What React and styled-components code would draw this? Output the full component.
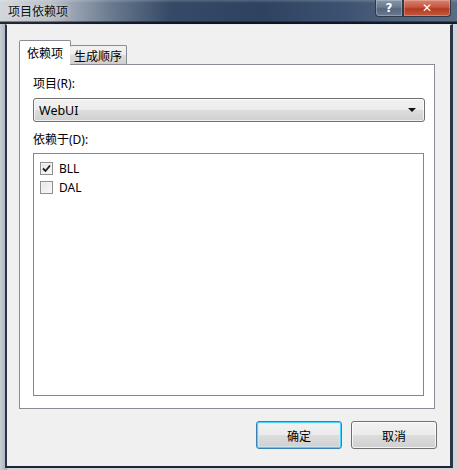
import React from "react";
import styled, { createGlobalStyle } from "styled-components";

const Global = createGlobalStyle`
  html, body { margin: 0; padding: 0; background: #e4e7eb; }
  body { font-family: "Segoe UI", "Noto Sans", "Noto Sans CJK SC", sans-serif; font-size: 12px; color: #000; }
`;

const Window = styled.div`
  width: 457px;
  height: 470px;
  display: flex;
  flex-direction: column;
  background: linear-gradient(to right, #c9ced6 0px, #aab3bf 6px, #cfd4da 8px);
  box-sizing: border-box;
  overflow: hidden;
`;

const TitleBar = styled.div`
  height: 24px;
  flex: none;
  display: flex;
  align-items: flex-start;
  justify-content: space-between;
  padding-left: 8px;
  box-sizing: border-box;
  background:
    linear-gradient(to bottom, rgba(255,255,255,0.18) 0px, rgba(255,255,255,0) 3px, rgba(0,0,0,0) 21px, rgba(10,15,25,0.85) 22px, rgba(10,15,25,0.9) 24px),
    linear-gradient(to right, #d3d7dc 0px, #b6bdc6 50px, #6b7b90 110px, #354a66 170px, #2d4360 260px, #3b5170 340px, #50637e 400px, #5a6b84 457px);
`;

const Title = styled.span`
  font-family: "Noto Sans CJK SC", sans-serif;
  font-size: 12px;
  line-height: 22px;
  color: #111;
  text-shadow: 0 0 6px rgba(255,255,255,0.7);
`;

const Caption = styled.div`
  display: flex;
  margin-right: 6px;
`;

const CapButton = styled.div`
  height: 17px;
  width: ${p => p.$w}px;
  box-sizing: border-box;
  display: flex;
  align-items: center;
  justify-content: center;
  color: #fff;
  font-family: "DejaVu Sans", sans-serif;
  font-weight: bold;
  font-size: 12px;
  border: 1px solid #30394a;
  border-top: none;
  background: ${p => p.$red
    ? "linear-gradient(to bottom, #d9826f 0%, #c8553f 45%, #b23a22 55%, #c45a3c 100%)"
    : "linear-gradient(to bottom, #8795a8 0%, #6b7a90 45%, #56667d 55%, #6a7b92 100%)"};
  border-radius: ${p => p.$red ? "0 0 4px 0" : "0 0 0 4px"};
  box-shadow: inset 0 0 0 1px rgba(255,255,255,0.25);
`;

const Body = styled.div`
  flex: 1;
  display: flex;
  padding: 0 4px 2px 5px;
  min-height: 0;
`;

const Client = styled.div`
  flex: 1;
  display: flex;
  flex-direction: column;
  background: #f0f0f0;
  border-left: 2px solid #2c3546;
  border-right: 3px solid #2c3546;
  border-bottom: 2px solid #1f2633;
  border-top: 1px solid #e8ecf2;
  padding: 15px 13px 0 12px;
  box-sizing: border-box;
`;

const TabStrip = styled.div`
  display: flex;
  align-items: flex-end;
  height: 24px;
  position: relative;
  z-index: 1;
`;

const Tab = styled.div`
  box-sizing: border-box;
  font-family: "Noto Sans CJK SC", sans-serif;
  font-size: 12px;
  display: flex;
  align-items: center;
  justify-content: center;
  border: 1px solid #898c95;
  border-radius: 2px 2px 0 0;
  ${p => p.$active ? `
    width: 52px;
    height: 25px;
    margin-bottom: -1px;
    background: #fff;
    border-bottom: none;
    padding-bottom: 2px;
  ` : `
    width: 57px;
    height: 19px;
    margin-left: -1px;
    border-left: none;
    border-bottom: none;
    background: linear-gradient(to bottom, #f2f2f2 0%, #ebebeb 50%, #dcdcdc 51%, #cfcfcf 100%);
  `}
`;

const Panel = styled.div`
  width: 416px;
  height: 345px;
  box-sizing: border-box;
  border: 1px solid #898c95;
  background: #fff;
  padding: 11px 9px 0 13px;
  display: flex;
  flex-direction: column;
`;

const Label = styled.div`
  font-family: "Segoe UI", "Noto Sans", "Noto Sans CJK SC", sans-serif;
  font-size: 12px;
  line-height: 16px;
  margin-bottom: ${p => p.$mb}px;
  margin-top: ${p => p.$mt || 0}px;
`;

const Combo = styled.div`
  height: 24px;
  box-sizing: border-box;
  border: 1px solid #707070;
  border-radius: 3px;
  background: linear-gradient(to bottom, #f2f2f2 0%, #ebebeb 50%, #dddddd 51%, #cfcfcf 100%);
  box-shadow: inset 0 0 0 1px rgba(255,255,255,0.7);
  display: flex;
  align-items: center;
  justify-content: space-between;
  padding: 0 8px 0 5px;
  font-family: "Noto Sans", sans-serif;
  font-size: 12.5px;
`;

const Arrow = styled.span`
  width: 0;
  height: 0;
  border-left: 4px solid transparent;
  border-right: 4px solid transparent;
  border-top: 4px solid #111;
`;

const ListBox = styled.div`
  width: 391px;
  height: 243px;
  box-sizing: border-box;
  border: 1px solid #828790;
  background: #fff;
  padding: 5px 0 0 6px;
  display: flex;
  flex-direction: column;
`;

const Row = styled.label`
  height: 19px;
  display: flex;
  align-items: center;
  gap: 4px;
  font-family: "Noto Sans", sans-serif;
  font-size: 12px;
`;

const Box = styled.span`
  width: 13px;
  height: 13px;
  box-sizing: border-box;
  border: 1px solid #8f8f8f;
  background: linear-gradient(135deg, #e4e4e4 0%, #fbfbfb 100%);
  box-shadow: inset 0 0 0 1px #f4f4f4;
  display: flex;
  align-items: center;
  justify-content: center;
  margin-right: 2px;
`;

const Footer = styled.div`
  display: flex;
  justify-content: flex-end;
  gap: 9px;
  margin-top: 12px;
`;

const Button = styled.div`
  width: 86px;
  height: 28px;
  box-sizing: border-box;
  border: 1px solid ${p => p.$focus ? "#3c7fb1" : "#707070"};
  border-radius: 3px;
  background: linear-gradient(to bottom, #f2f2f2 0%, #ebebeb 50%, #dddddd 51%, #cfcfcf 100%);
  box-shadow: ${p => p.$focus
    ? "inset 0 0 0 1px #48d2ff, inset 0 0 0 2px rgba(200,240,255,0.6)"
    : "inset 0 0 0 1px rgba(255,255,255,0.75)"};
  display: flex;
  align-items: center;
  justify-content: center;
  font-family: "Noto Sans CJK SC", sans-serif;
  font-size: 12px;
`;

function Check() {
  return (
    <svg width="9" height="9" viewBox="0 0 9 9">
      <path d="M1 4.5 L3.5 7 L8 1.5" fill="none" stroke="#1c1c1c" strokeWidth="1.8" />
    </svg>
  );
}

export default function App() {
  return (
    <Window>
      <Global />
      <TitleBar>
        <Title>项目依赖项</Title>
        <Caption>
          <CapButton $w={28}>?</CapButton>
          <CapButton $w={48} $red>✕</CapButton>
        </Caption>
      </TitleBar>
      <Body>
        <Client>
          <TabStrip>
            <Tab $active>依赖项</Tab>
            <Tab>生成顺序</Tab>
          </TabStrip>
          <Panel>
            <Label $mb={6}>项目(R):</Label>
            <Combo>
              <span>WebUI</span>
              <Arrow />
            </Combo>
            <Label $mt={10} $mb={5}>依赖于(D):</Label>
            <ListBox>
              <Row><Box><Check /></Box>BLL</Row>
              <Row><Box />DAL</Row>
            </ListBox>
          </Panel>
          <Footer>
            <Button $focus>确定</Button>
            <Button>取消</Button>
          </Footer>
        </Client>
      </Body>
    </Window>
  );
}
